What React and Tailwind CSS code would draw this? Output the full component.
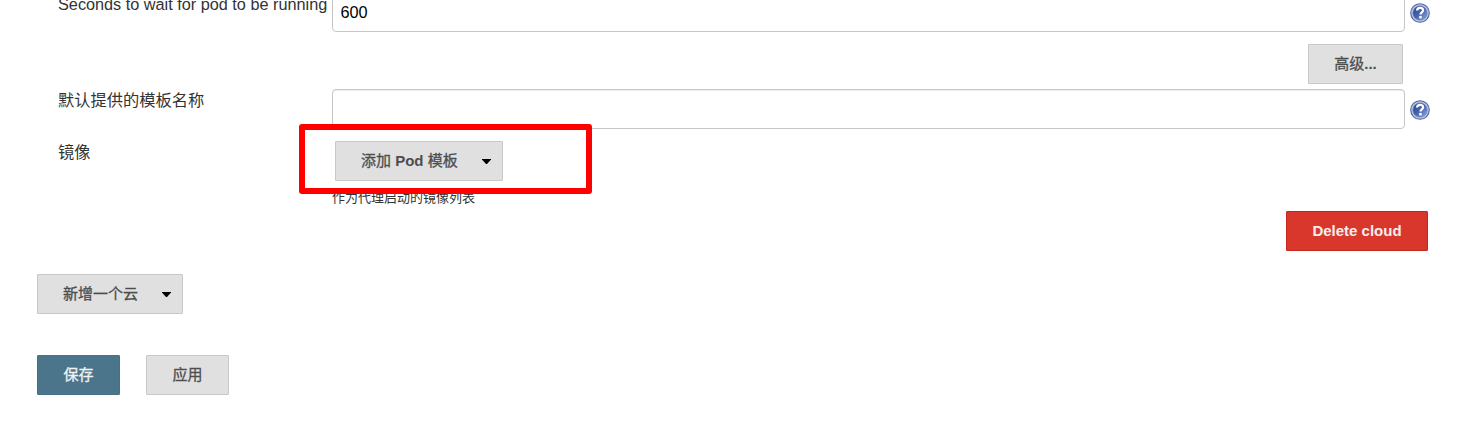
import React from 'react';

const base = 'flex h-10 shrink-0 items-center rounded-[1px] border text-[15px] leading-[20px] whitespace-nowrap';
const grey = 'border-[#c8c8c8] bg-[#e0e0e0] text-[#4d4d4d]';
const cjk = 'font-normal [-webkit-text-stroke:0.3px_currentColor]';

function HelpIcon() {
  return (
    <svg className="block h-5 w-5 shrink-0" viewBox="0 0 20 20" role="img" aria-label="Help">
      <defs>
        <linearGradient id="help-fill" x1="0" y1="0" x2="1" y2="1">
          <stop offset="0" stopColor="#2c4791" />
          <stop offset="0.5" stopColor="#4663ab" />
          <stop offset="1" stopColor="#93abdc" />
        </linearGradient>
      </defs>
      <circle cx="10" cy="10" r="9.3" fill="#b9c6e4" stroke="#5266a6" strokeWidth="1.1" />
      <circle cx="10" cy="10" r="7.1" fill="url(#help-fill)" stroke="#5a73b3" strokeWidth="0.6" />
      <path d="M7 7.5C7.2 5.6 8.4 4.8 10.1 4.8c1.8 0 3 .9 3 2.5 0 2.1-2.6 2.1-2.6 4.3" fill="none" stroke="#fff" strokeWidth="2.2" />
      <rect x="9.2" y="12.9" width="2.5" height="2.5" fill="#fff" />
    </svg>
  );
}

function Caret() {
  return (
    <svg className="block h-[5px] w-[9px]" viewBox="0 0 9 5" aria-hidden="true">
      <path d="M0 0h9v.6L5 5H4L0 .6z" fill="#000" />
    </svg>
  );
}

function TextField({ value = '', label }) {
  return (
    <input
      aria-label={label}
      defaultValue={value}
      className="h-10 w-[1073px] shrink-0 rounded-[4px] border border-[#c6c6c6] bg-white pt-px pr-[8px] pl-[7.5px] text-[16.25px] text-black shadow-[inset_0_1px_1px_rgba(0,0,0,0.075)] outline-none"
    />
  );
}

export default function App() {
  return (
    <main className="h-[437px] w-[1462px] overflow-hidden bg-white font-['Liberation_Sans','Noto_Sans_CJK_SC',sans-serif] text-[#333]">
      <section className="flex h-8 items-end overflow-hidden pl-[58px]">
        <label className="h-10 w-[274px] shrink-0 pt-[2px] text-[16.25px] leading-[20px] whitespace-nowrap">Seconds to wait for pod to be running</label>
        <TextField value="600" label="Seconds to wait for pod to be running" />
        <div className="ml-[5px] h-[29px]"><HelpIcon /></div>
      </section>

      <div className="flex justify-end pt-3 pr-[59px]">
        <button className={`${base} ${grey} w-[95px] justify-center`}><span className={cjk}>高级</span><span className="font-bold">...</span></button>
      </div>

      <section className="mt-[5px] flex pl-[58px]">
        <label className="w-[274px] shrink-0 text-[16.25px] leading-[22px]">默认提供的模板名称</label>
        <TextField label="默认提供的模板名称" />
        <div className="ml-[5px] pt-[11px]"><HelpIcon /></div>
      </section>

      <section className="relative flex h-[82px] pl-[58px]">
        <div className="w-[274px] shrink-0 pt-[12px] text-[16.25px] leading-[22px]">镜像</div>
        <div className="pt-3">
          <button className={`${base} ${grey} ml-[3px] w-[168px] justify-between pr-[11px] pl-[25px]`}>
            <span><span className={cjk}>添加</span><b className="font-bold"> Pod </b><span className={cjk}>模板</span></span>
            <Caret />
          </button>
          <div className="mt-[8px] text-[13px] leading-[18px]">作为代理启动的镜像列表</div>
        </div>
        <div className="pointer-events-none absolute top-[-5px] left-[299px] h-[70px] w-[293px] rounded-[3px] border-[6px] border-[#fe0000]" />
      </section>

      <div className="flex justify-end pr-[34px]">
        <button className={`${base} w-[142px] justify-center border-[#c4281b] bg-[#d9372c] font-bold text-[#f4eeee]`}>Delete cloud</button>
      </div>

      <div className="mt-[23px] pl-[37px]">
        <button className={`${base} ${grey} w-[146px] justify-between pr-[11px] pl-[25px]`}>
          <span className={cjk}>新增一个云</span>
          <Caret />
        </button>
      </div>

      <div className="mt-[41px] flex gap-[26px] pl-[37px]">
        <button className={`${base} w-[83px] justify-center border-[#457189] bg-[#4b758b] text-[#f2f2f2]`}><span className={cjk}>保存</span></button>
        <button className={`${base} ${grey} w-[83px] justify-center`}><span className={cjk}>应用</span></button>
      </div>
    </main>
  );
}
